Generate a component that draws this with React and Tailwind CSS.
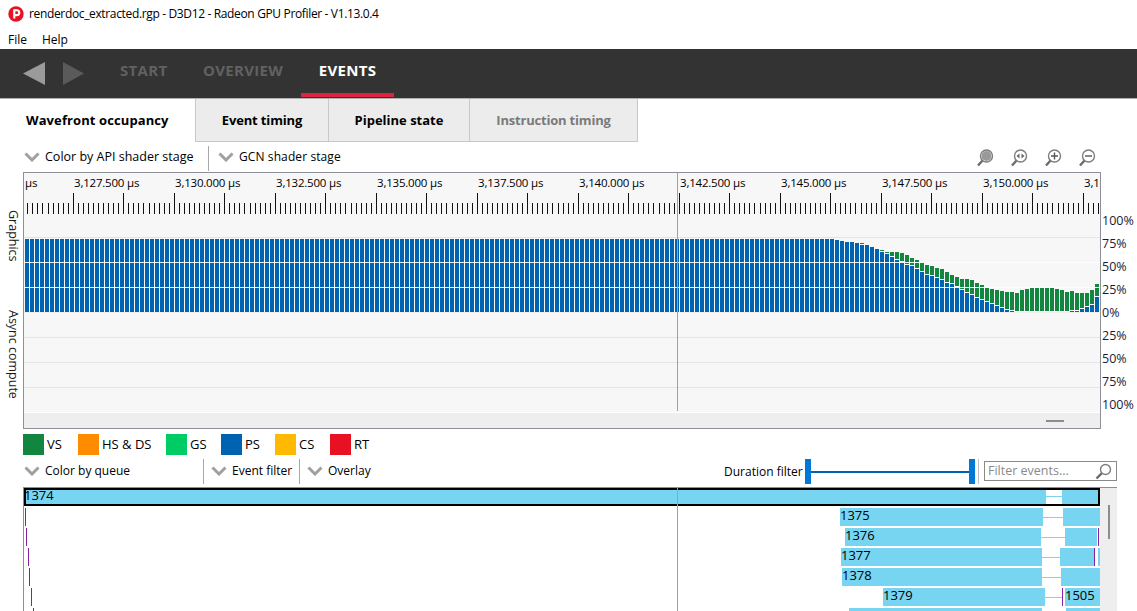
const blueTops = [41, 41, 43, 44, 47, 50, 52, 55, 59, 61, 66, 73, 80, 88, 97, 104, 112, 120, 124, 133, 142, 149, 152, 158, 164, 173, 178, 185, 196, 203, 210, 220, 225, 232, 238, 244, 250, 254, 257, 260, 260, 260, 260, 260, 260, 260, 260, 260, 260, 260, 257, 257, 251, 247, 241, 216];
const greenTops = [0, 0, 0, 0, 0, 0, 47, 50, 53, 56, 62, 69, 75, 81, 81, 81, 84, 91, 99, 105, 113, 120, 123, 129, 132, 141, 150, 156, 162, 162, 165, 174, 180, 189, 192, 195, 198, 200, 200, 204, 196, 192, 188, 188, 188, 188, 188, 192, 195, 200, 198, 203, 204, 204, 195, 177];

// bars of the occupancy graph, in page pixels
const bars = Array.from({ length: 215 }, (_, i) => {
	const k = i - 159;
	const blueTop = k < 0 ? 239 : Math.round(225 + blueTops[k] / 3);
	const greenTop = k >= 0 && greenTops[k] ? Math.round(225 + greenTops[k] / 3) : null;
	return { x: 25 + i * 5, blueTop, greenTop };
});

const rulerLabels = ["3,127.500 µs", "3,130.000 µs", "3,132.500 µs", "3,135.000 µs", "3,137.500 µs", "3,140.000 µs", "3,142.500 µs", "3,145.000 µs", "3,147.500 µs", "3,150.000 µs", "3,1"];
const percentLabels = ["100%", "75%", "50%", "25%", "0%", "25%", "50%", "75%", "100%"];
const legend = [
	["VS", "bg-[#12863f]", "w-[55px]"],
	["HS & DS", "bg-[#ff8c00]", "w-[88px]"],
	["GS", "bg-[#00cc66]", "w-[55px]"],
	["PS", "bg-[#0063b1]", "w-[54px]"],
	["CS", "bg-[#ffb900]", "w-[55px]"],
	["RT", "bg-[#e81123]", "w-[55px]"],
];

const rows = [
	{ tick: 25, spans: [[840, 1043, "1375"], [1063, 1100]], line: [1043, 1063] },
	{ tick: 26, spans: [[845, 1041, "1376"], [1065, 1097]], line: [1041, 1065], marks: [1098] },
	{ tick: 28, spans: [[841, 1042, "1377"], [1060, 1094], [1098, 1100]], line: [1042, 1060], marks: [1094] },
	{ tick: 29, spans: [[842, 1042, "1378"], [1061, 1100]], line: [1042, 1061] },
	{ tick: 31, spans: [[883, 1045, "1379"], [1065, 1100, "1505"]], line: [1045, 1062], marks: [1062] },
	{ tick: 33, spans: [[849, 1042], [1066, 1100]], line: [1042, 1066] },
];

const Chevron = () => (
	<svg width="16" height="10" viewBox="0 0 16 10" className="shrink-0">
		<path d="M1.5 1.5 L8 8 L14.5 1.5" fill="none" stroke="#a0a0a0" strokeWidth="3" />
	</svg>
);

const Dropdown = ({ label, className }) => (
	<div className={`flex items-center gap-[5px] ${className}`}>
		<Chevron />
		<span>{label}</span>
	</div>
);

const Magnifier = ({ children }) => (
	<svg width="18" height="18" viewBox="0 0 18 18">
		<line x1="7" y1="11" x2="2" y2="16.5" stroke="#6b6b6b" strokeWidth="2.4" />
		<circle cx="10.5" cy="7" r="6" fill="#fff" stroke="#7d7d7d" strokeWidth="1.4" />
		{children}
	</svg>
);

const EventRow = ({ row }) => (
	<div className="relative h-[18px] mb-[2px]">
		<div className="absolute top-0 h-[18px] w-[1px] bg-[#8a1fa0]" style={{ left: row.tick - 24 }} />
		<div className="absolute top-[9px] h-[1px] bg-[#77d5f1]" style={{ left: row.line[0] - 24, width: row.line[1] - row.line[0] }} />
		{row.spans.map(([from, to, label], i) => (
			<div key={i} className="absolute top-0 h-[18px] bg-[#77d5f1] text-[13px] leading-[14px] text-black" style={{ left: from - 24, width: to - from }}>
				{label}
			</div>
		))}
		{row.marks?.map((x) => (
			<div key={x} className="absolute top-0 h-[18px] w-[1px] bg-[#8a1fa0]" style={{ left: x - 24 }} />
		))}
	</div>
);

const App = () => {
	return (
		<div className="w-[1137px] h-[611px] overflow-hidden bg-white text-[12px] text-black font-['Open_Sans',sans-serif]">
			{/* window title */}
			<div className="h-[27px] flex items-center pl-[8px]">
				<svg width="16" height="16" viewBox="0 0 16 16" className="shrink-0">
					<circle cx="8" cy="8" r="7.7" fill="#e81123" />
					<path d="M6.3 12.5 V4.2 H8.8 a2.4 2.4 0 0 1 0 4.9 H6.3" fill="none" stroke="#fff" strokeWidth="2.1" />
				</svg>
				<span className="ml-[5px] tracking-[-0.35px]">renderdoc_extracted.rgp - D3D12 - Radeon GPU Profiler - V1.13.0.4</span>
			</div>
			<div className="h-[22px] flex items-center pl-[8px] pt-[3px] gap-[15px]">
				<span>File</span>
				<span>Help</span>
			</div>

			{/* main navigation */}
			<div className="h-[50px] bg-[#333333] border-b border-[#b0b0b0] flex items-stretch pl-[23px] font-bold text-[15px] tracking-[0.3px]">
				<svg width="62" height="49" viewBox="0 0 62 49" className="shrink-0">
					<path d="M22 13 V36 L0 24.5 Z" fill="#9a9a9a" />
					<path d="M40 13 V36 L61 24.5 Z" fill="#5a5a5a" />
				</svg>
				<div className="ml-[35px] w-[83px] flex items-center pb-[6px] text-[#616161]">START</div>
				<div className="w-[98px] flex items-center pb-[6px] text-[#616161]">OVERVIEW</div>
				<div className="w-[93px] flex items-center justify-center pb-[6px] text-white relative">
					EVENTS
					<div className="absolute bottom-[1px] left-0 right-0 h-[4px] bg-[#e0233b]" />
				</div>
			</div>

			{/* pane tabs */}
			<div className="h-[43px] flex items-stretch font-bold text-[13px]">
				<div className="w-[196px] pl-[26px] flex items-center border-r border-[#c8c8c8] tracking-[0.1px]">Wavefront occupancy</div>
				<div className="w-[133px] pt-[1px] flex items-center justify-center bg-[#ececec] border-r border-b border-[#c8c8c8] tracking-[-0.15px]">Event timing</div>
				<div className="w-[141px] pt-[1px] flex items-center justify-center bg-[#ececec] border-r border-b border-[#c8c8c8]">Pipeline state</div>
				<div className="w-[168px] pt-[1px] flex items-center justify-center bg-[#ececec] border-r border-b border-[#c8c8c8] text-[#7a7a7a] tracking-[-0.2px]">Instruction timing</div>
			</div>

			{/* occupancy toolbar */}
			<div className="h-[26px] mt-[3px] flex items-center pl-[24px] pr-[41px]">
				<Dropdown label="Color by API shader stage" className="w-[184px] text-[12.5px] pb-[2px]" />
				<div className="w-[1px] h-[25px] bg-[#a8a8a8]" />
				<Dropdown label="GCN shader stage" className="ml-[9px] tracking-[0.1px] pb-[2px]" />
				<div className="ml-auto flex items-center gap-[16px]">
					<Magnifier>
						<circle cx="10.5" cy="7" r="5" fill="#9a9a9a" />
					</Magnifier>
					<Magnifier>
						<path d="M9.5 4.5 L6.5 7 L9.5 9.5 Z M11.5 4.5 L14.5 7 L11.5 9.5 Z" fill="#666" />
					</Magnifier>
					<Magnifier>
						<path d="M10.5 3.5 V10.5 M7 7 H14" stroke="#555" strokeWidth="1.4" />
					</Magnifier>
					<Magnifier>
						<path d="M7 7 H14" stroke="#555" strokeWidth="1.4" />
					</Magnifier>
				</div>
			</div>

			{/* occupancy graph */}
			<div className="h-[257px] mt-[1px] flex items-stretch">
				<div className="w-[23px] flex flex-col items-center pl-[2px] pt-[38px] text-[#1a1a1a] text-[12.5px]">
					<div className="[writing-mode:vertical-rl] h-[100px]">Graphics</div>
					<div className="[writing-mode:vertical-rl]">Async compute</div>
				</div>
				<div className="w-[1078px] relative border border-[#8d9197] bg-[#f7f7f7] flex flex-col">
					<div className="h-[19px] flex items-center overflow-hidden whitespace-nowrap text-[11.5px] tracking-[-0.2px]">
						<div className="w-[50px] shrink-0 pl-[1px]">µs</div>
						{rulerLabels.map((label) => (
							<div key={label} className="w-[101px] shrink-0">{label}</div>
						))}
					</div>
					<svg width="1076" height="220" viewBox="24 192 1076 220" className="block">
						{Array.from({ length: 214 }, (_, i) => {
							const x = Math.round(27.3 + i * 5.05) + 0.5;
							const major = i % 10 === 9;
							return <line key={i} x1={x} x2={x} y1={major ? 193 : 203} y2={214} stroke="#111" strokeWidth="1" />;
						})}
						{[237, 262, 287, 337, 362, 387].map((y) => (
							<rect key={y} x="24" y={y} width="1076" height="1" fill="#e4e4e4" />
						))}
						{bars.map(({ x, blueTop, greenTop }) => (
							<g key={x}>
								{greenTop !== null && <rect x={x} y={greenTop} width="4" height={Math.max(blueTop - 1 - greenTop, 0)} fill="#12863f" />}
								<rect x={x} y={blueTop} width="4" height={Math.max(312 - blueTop, 0)} fill="#0063b1" />
							</g>
						))}
						<rect x="24" y="262" width="1076" height="1" fill="#fff" fillOpacity="0.9" />
						<rect x="24" y="287" width="1076" height="1" fill="#fff" fillOpacity="0.9" />
						<rect x="24" y="312" width="1076" height="1" fill="#f0f0f0" />
					</svg>
					<div className="flex-1 bg-[#eeeeee] border-t border-white relative">
						<div className="absolute left-[1022px] top-[7px] w-[18px] h-[2px] bg-[#8c8c8c]" />
					</div>
					<div className="absolute left-[653px] top-0 h-[238px] w-[1px] bg-[#a0a0a0]" />
				</div>
				<div className="flex-1 pl-[1px] pt-[37px] text-[#1a1a3a] text-[12.5px]">
					{percentLabels.map((label, i) => (
						<div key={i} className="h-[23px] leading-[23px]">{label}</div>
					))}
				</div>
			</div>

			{/* legend */}
			<div className="h-[21px] mt-[5px] ml-[23px] flex items-center text-[13px]">
				{legend.map(([label, color, width]) => (
					<div key={label} className={`flex items-center gap-[3px] ${width}`}>
						<div className={`w-[21px] h-[21px] ${color}`} />
						<span>{label}</span>
					</div>
				))}
			</div>

			{/* events toolbar */}
			<div className="h-[26px] mt-[3px] flex items-center pl-[24px]">
				<Dropdown label="Color by queue" className="w-[179px]" />
				<div className="w-[1px] h-[25px] self-end bg-[#a8a8a8]" />
				<Dropdown label="Event filter" className="ml-[7px] w-[88px]" />
				<div className="w-[1px] h-[25px] self-end bg-[#a8a8a8]" />
				<Dropdown label="Overlay" className="ml-[7px] w-[417px]" />
				<span className="w-[81px] shrink-0 pt-[2px]">Duration filter</span>
				<div className="w-[170px] h-[25px] self-end flex items-center shrink-0">
					<div className="w-[6px] h-[25px] bg-[#0078d7]" />
					<div className="flex-1 h-[2px] bg-[#0063b1]" />
					<div className="w-[6px] h-[25px] bg-[#0078d7]" />
				</div>
				<div className="ml-[3px] w-[1px] h-[25px] self-end bg-[#c0c0c0]" />
				<div className="ml-[5px] w-[133px] h-[20px] border border-[#8a8a8a] flex items-center justify-between pl-[3px] pr-[4px] text-[#8a8a8a] text-[12.5px]">
					<span>Filter events...</span>
					<svg width="17" height="17" viewBox="0 0 17 17">
						<line x1="7" y1="10" x2="1.5" y2="15.5" stroke="#6b6b6b" strokeWidth="2.4" />
						<circle cx="10.5" cy="6.5" r="5" fill="#fff" stroke="#7d7d7d" strokeWidth="1.4" />
					</svg>
				</div>
			</div>

			{/* event timeline */}
			<div className="mt-[3px] ml-[23px] w-[1094px] h-[124px] relative flex border-t border-[#8d9197] border-l overflow-hidden">
				<div className="w-[1076px] shrink-0">
					<div className="relative h-[18px] mb-[2px] bg-white">
						<div className="absolute top-0 left-0 w-[1022px] h-[18px] bg-[#77d5f1]" />
						<div className="absolute top-[8px] left-[1022px] w-[16px] h-[1px] bg-[#77d5f1]" />
						<div className="absolute top-0 left-[1038px] w-[38px] h-[18px] bg-[#77d5f1]" />
						<div className="absolute inset-0 border-2 border-black" />
						<div className="absolute top-0 left-0 text-[13px] leading-[14px]">1374</div>
					</div>
					{rows.map((row) => (
						<EventRow key={row.tick} row={row} />
					))}
				</div>
				<div className="flex-1 bg-[#eeeeee] relative">
					<div className="absolute left-[8px] top-[17px] w-[2px] h-[34px] bg-[#8c8c8c]" />
				</div>
				<div className="absolute left-[653px] top-0 bottom-0 w-[1px] bg-[#a0a0a0]" />
			</div>
		</div>
	);
};

export default App;
